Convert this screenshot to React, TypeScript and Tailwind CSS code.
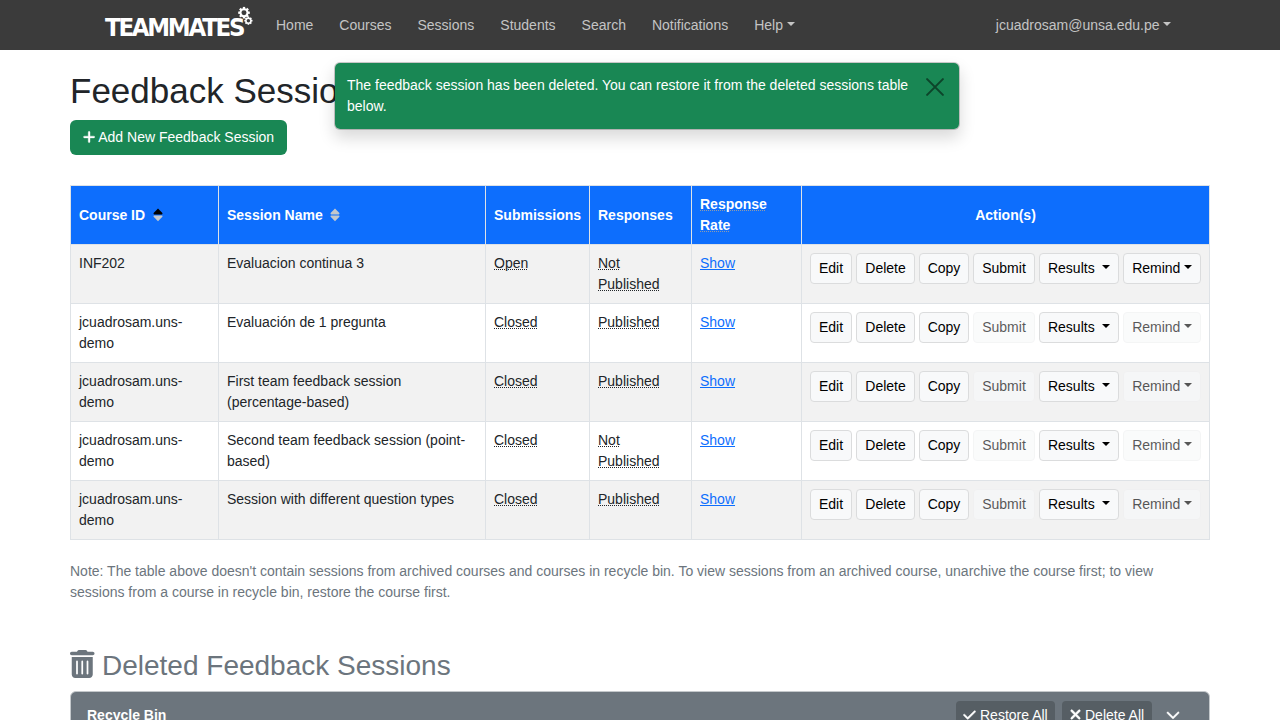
import React from "react";
import { FaCheck, FaChevronDown, FaPlus, FaTrashCan, FaXmark } from "react-icons/fa6";

type Session = {
  course: string;
  name: string;
  submission: string;
  response: string;
  open: boolean;
};

const sessions: Session[] = [
  { course: "INF202", name: "Evaluacion continua 3", submission: "Open", response: "Not Published", open: true },
  { course: "jcuadrosam.uns-demo", name: "Evaluación de 1 pregunta", submission: "Closed", response: "Published", open: false },
  { course: "jcuadrosam.uns-demo", name: "First team feedback session (percentage-based)", submission: "Closed", response: "Published", open: false },
  { course: "jcuadrosam.uns-demo", name: "Second team feedback session (point-based)", submission: "Closed", response: "Not Published", open: false },
  { course: "jcuadrosam.uns-demo", name: "Session with different question types", submission: "Closed", response: "Published", open: false },
];

const navItems = ["Home", "Courses", "Sessions", "Students", "Search", "Notifications"];

function Caret({ className = "ml-[3.5px]" }: { className?: string }) {
  return (
    <span
      className={`inline-block h-0 w-0 border-x-[4.2px] border-t-[4.2px] border-x-transparent border-t-current align-[3.57px] ${className}`}
    />
  );
}

function Gear({ cx, cy, r }: { cx: number; cy: number; r: number }) {
  const teeth = [0, 45, 90, 135];
  return (
    <g transform={`translate(${cx} ${cy})`}>
      {teeth.map((a) => (
        <rect key={a} x={-r * 0.2} y={-r} width={r * 0.4} height={r * 2} fill="#fff" transform={`rotate(${a})`} />
      ))}
      <circle r={r * 0.78} fill="#fff" />
      <circle r={r * 0.43} fill="#3b3b3b" />
    </g>
  );
}

function Logo() {
  return (
    <svg width="150" height="36" viewBox="0 0 150 36" className="block shrink-0 overflow-visible">
      <text
        transform="translate(1 28.9) scale(0.92 1)"
        fill="#fff"
        fontSize="25"
        fontWeight="700"
        fontFamily="DejaVu Sans, sans-serif"
        letterSpacing="-2.5"
      >
        TEAMMATES
      </text>
      <Gear cx={140} cy={5.7} r={5.8} />
      <Gear cx={144.4} cy={13.7} r={4.1} />
    </svg>
  );
}

function SortIcon({ active = false }: { active?: boolean }) {
  return (
    <svg width="10" height="14" viewBox="0 0 10 14" className="ml-[7.5px] inline-block align-[-2px]">
      <path d="M5 .6 L9.4 5.1 Q9.8 6.4 8.8 6.4 H1.2 Q.2 6.4 .6 5.1 Z" fill={active ? "#000" : "#c4c8cc"} />
      <path d="M5 13.2 L9.4 8.7 Q9.8 7.4 8.8 7.4 H1.2 Q.2 7.4 .6 8.7 Z" fill="#c4c8cc" />
    </svg>
  );
}

function ActionButton({ label, caret, disabled, width }: { label: string; caret?: "wide" | "tight"; disabled?: boolean; width: string }) {
  return (
    <button
      disabled={disabled}
      className={`h-[31px] shrink-0 rounded-[4px] border bg-[#f8f9fa] text-center whitespace-nowrap text-black ${width} ${disabled ? "border-[#eff0f1] opacity-65" : "border-[#dbdcdd]"}`}
    >
      {label}
      {caret && <Caret className={caret === "wide" ? "ml-[7.4px]" : "ml-[3.5px]"} />}
    </button>
  );
}

function Hint({ children }: { children: React.ReactNode }) {
  return <span className="underline decoration-dotted decoration-1">{children}</span>;
}

const th = "border border-[#dee2e6] px-2 text-left align-middle font-bold";
const td = "border border-[#dee2e6] px-2 pt-2 align-top";

export default function App() {
  return (
    <div className="relative h-[720px] w-[1280px] overflow-hidden bg-white font-['Liberation_Sans',Arial,sans-serif] text-[14px] leading-[21px] text-[#212529]">
      <nav className="flex h-[50px] items-center bg-[#3b3b3b] pr-[109px] pl-[104px] text-[#c4c4c4]">
        <Logo />
        <div className="ml-[22px] flex gap-[26px]">
          {navItems.map((item) => (
            <a key={item}>{item}</a>
          ))}
          <a className="whitespace-nowrap">Help<Caret /></a>
        </div>
        <a className="ml-auto whitespace-nowrap">jcuadrosam@unsa.edu.pe<Caret /></a>
      </nav>

      <main className="mx-[70px] pt-5">
        <h1 className="text-[35px] leading-[42px]">Feedback Sessions</h1>
        <button className="mt-2 flex h-[35px] w-[217px] items-center rounded-[6px] bg-[#198754] pl-[13px] whitespace-nowrap text-white">
          <FaPlus className="mr-[3px] mb-[2px] h-[14px] w-[12.25px]" stroke="currentColor" strokeWidth="14" />
          Add New Feedback Session
        </button>

        <table className="mt-[30px] w-[1140px] table-fixed border-collapse">
          <colgroup>
            <col className="w-[148px]" />
            <col className="w-[267px]" />
            <col className="w-[104px]" />
            <col className="w-[102px]" />
            <col className="w-[110px]" />
            <col className="w-[408px]" />
          </colgroup>
          <thead>
            <tr className="h-[59px] bg-[#0d6efd] text-white">
              <th className={th}>Course ID<SortIcon active /></th>
              <th className={th}>Session Name<SortIcon /></th>
              <th className={th}>Submissions</th>
              <th className={th}>Responses</th>
              <th className={th}><span className="underline decoration-[#8f9bab] decoration-dotted decoration-1">Response Rate</span></th>
              <th className="border border-[#dee2e6] text-center">Action(s)</th>
            </tr>
          </thead>
          <tbody>
            {sessions.map((s) => (
              <tr key={s.name} className="h-[59px] odd:bg-[#f2f2f2]">
                <td className={td}>{s.course}</td>
                <td className={td}>{s.name}</td>
                <td className={td}><Hint>{s.submission}</Hint></td>
                <td className={td}><Hint>{s.response}</Hint></td>
                <td className={td}><a className="text-[#0d6efd] underline">Show</a></td>
                <td className={td}>
                  <div className="flex gap-1">
                    <ActionButton label="Edit" width="w-[42px]" />
                    <ActionButton label="Delete" width="w-[59px]" />
                    <ActionButton label="Copy" width="w-[50px]" />
                    <ActionButton label="Submit" width="w-[62px]" disabled={!s.open} />
                    <ActionButton label="Results" width="w-[80px]" caret="wide" />
                    <ActionButton label="Remind" width="w-[78px]" caret="tight" disabled={!s.open} />
                  </div>
                </td>
              </tr>
            ))}
          </tbody>
        </table>

        <p className="mt-[21px] text-[#6c757d]">
          Note: The table above doesn't contain sessions from archived courses and courses in recycle bin. To view sessions from an archived course, unarchive the course first; to view sessions from a course in recycle bin, restore the course first.
        </p>

        <h2 className="mt-[46px] flex h-[34px] items-center text-[28px] leading-[34px] text-[#6c757d]">
          <FaTrashCan className="mr-[7.5px] mb-[4px] h-[28px] w-[24.5px]" />
          Deleted Feedback Sessions
        </h2>

        <section className="mt-2 flex h-[60px] items-start rounded-t-[6px] border border-[#c4c8cb] bg-[#6c757d] pt-[9px] pr-[29px] pl-4 text-white">
          <strong className="mt-1">Recycle Bin</strong>
          <button className="ml-auto flex h-[28px] w-[99px] items-center rounded-t-[4px] bg-[#565e64] pl-[7px] whitespace-nowrap">
            <FaCheck className="mr-[4px] mb-px h-[14px] w-[13px]" stroke="currentColor" strokeWidth="16" />
            Restore All
          </button>
          <button className="ml-[7px] flex h-[28px] w-[90px] items-center rounded-t-[4px] bg-[#565e64] pl-[7px] whitespace-nowrap">
            <FaXmark className="mr-[3px] mb-px h-[15px] w-[13px]" stroke="currentColor" strokeWidth="24" />
            Delete All
          </button>
          <FaChevronDown className="mt-[6px] ml-[14px] h-[15px] w-[14px]" stroke="currentColor" strokeWidth="16" />
        </section>
      </main>

      <div className="absolute top-[62px] left-[334px] flex h-[68px] w-[626px] rounded-[6px] border border-black/20 bg-[#198754] bg-clip-padding pt-[12px] pl-3 text-white shadow-[0_8px_16px_rgba(0,0,0,0.15)]">
        <p className="w-[566px]">The feedback session has been deleted. You can restore it from the deleted sessions table below.</p>
        <svg width="18" height="18" viewBox="0 0 16 16" className="mt-[3px] ml-[13px]" stroke="#0d442a" strokeWidth="1.8" strokeLinecap="round">
          <path d="M1 1 L15 15 M15 1 L1 15" />
        </svg>
      </div>
    </div>
  );
}
